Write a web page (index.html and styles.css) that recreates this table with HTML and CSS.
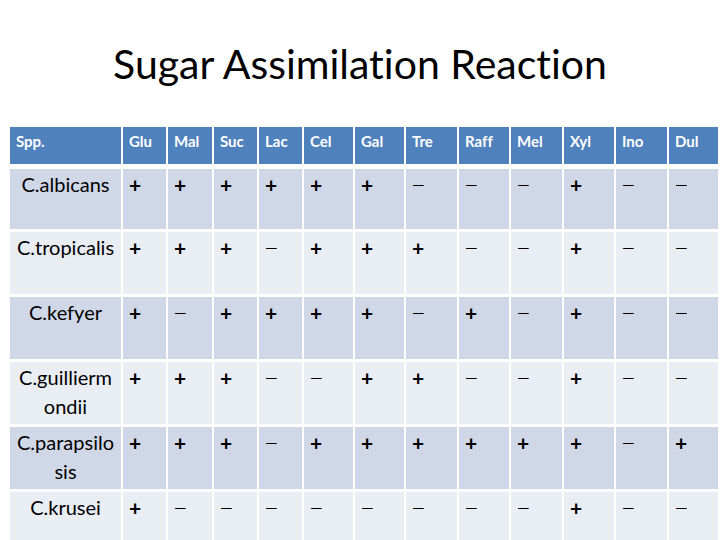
FILE: index.html
```html
<!DOCTYPE html>
<html lang="en">
<head>
<meta charset="utf-8">
<title>Sugar Assimilation Reaction</title>
<link rel="stylesheet" href="styles.css">
</head>
<body>
<h1 class="title">Sugar Assimilation Reaction</h1>
<div class="table">
  <div class="thead">
    <div class="th">Spp.</div><div class="th">Glu</div><div class="th">Mal</div><div class="th">Suc</div><div class="th">Lac</div><div class="th">Cel</div><div class="th">Gal</div><div class="th">Tre</div><div class="th">Raff</div><div class="th">Mel</div><div class="th">Xyl</div><div class="th">Ino</div><div class="th">Dul</div>
  </div>
  <div class="tbody">
    <div class="tr dark">
      <div class="td name">C.albicans</div>
      <div class="td"><span class="p">+</span></div><div class="td"><span class="p">+</span></div><div class="td"><span class="p">+</span></div><div class="td"><span class="p">+</span></div><div class="td"><span class="p">+</span></div><div class="td"><span class="p">+</span></div><div class="td"><span class="m">—</span></div><div class="td"><span class="m">—</span></div><div class="td"><span class="m">—</span></div><div class="td"><span class="p">+</span></div><div class="td"><span class="m">—</span></div><div class="td"><span class="m">—</span></div>
    </div>
    <div class="tr light">
      <div class="td name">C.tropicalis</div>
      <div class="td"><span class="p">+</span></div><div class="td"><span class="p">+</span></div><div class="td"><span class="p">+</span></div><div class="td"><span class="m">—</span></div><div class="td"><span class="p">+</span></div><div class="td"><span class="p">+</span></div><div class="td"><span class="p">+</span></div><div class="td"><span class="m">—</span></div><div class="td"><span class="m">—</span></div><div class="td"><span class="p">+</span></div><div class="td"><span class="m">—</span></div><div class="td"><span class="m">—</span></div>
    </div>
    <div class="tr dark">
      <div class="td name">C.kefyer</div>
      <div class="td"><span class="p">+</span></div><div class="td"><span class="m">—</span></div><div class="td"><span class="p">+</span></div><div class="td"><span class="p">+</span></div><div class="td"><span class="p">+</span></div><div class="td"><span class="p">+</span></div><div class="td"><span class="m">—</span></div><div class="td"><span class="p">+</span></div><div class="td"><span class="m">—</span></div><div class="td"><span class="p">+</span></div><div class="td"><span class="m">—</span></div><div class="td"><span class="m">—</span></div>
    </div>
    <div class="tr light">
      <div class="td name">C.guillierm ondii</div>
      <div class="td"><span class="p">+</span></div><div class="td"><span class="p">+</span></div><div class="td"><span class="p">+</span></div><div class="td"><span class="m">—</span></div><div class="td"><span class="m">—</span></div><div class="td"><span class="p">+</span></div><div class="td"><span class="p">+</span></div><div class="td"><span class="m">—</span></div><div class="td"><span class="m">—</span></div><div class="td"><span class="p">+</span></div><div class="td"><span class="m">—</span></div><div class="td"><span class="m">—</span></div>
    </div>
    <div class="tr dark">
      <div class="td name">C.parapsilo sis</div>
      <div class="td"><span class="p">+</span></div><div class="td"><span class="p">+</span></div><div class="td"><span class="p">+</span></div><div class="td"><span class="m">—</span></div><div class="td"><span class="p">+</span></div><div class="td"><span class="p">+</span></div><div class="td"><span class="p">+</span></div><div class="td"><span class="p">+</span></div><div class="td"><span class="p">+</span></div><div class="td"><span class="p">+</span></div><div class="td"><span class="m">—</span></div><div class="td"><span class="p">+</span></div>
    </div>
    <div class="tr light">
      <div class="td name">C.krusei</div>
      <div class="td"><span class="p">+</span></div><div class="td"><span class="m">—</span></div><div class="td"><span class="m">—</span></div><div class="td"><span class="m">—</span></div><div class="td"><span class="m">—</span></div><div class="td"><span class="m">—</span></div><div class="td"><span class="m">—</span></div><div class="td"><span class="m">—</span></div><div class="td"><span class="m">—</span></div><div class="td"><span class="p">+</span></div><div class="td"><span class="m">—</span></div><div class="td"><span class="m">—</span></div>
    </div>
  </div>
</div>
</body>
</html>
```

FILE: styles.css
```css
html, body {
  margin: 0;
  padding: 0;
  background: #ffffff;
  width: 720px;
  height: 540px;
  overflow: hidden;
}

body {
  font-family: Lato, "Liberation Sans", sans-serif;
  color: #000;
  font-variant-ligatures: none;
}

.title {
  margin: 0;
  padding-top: 39px;
  height: 127px;
  box-sizing: border-box;
  font-size: 41px;
  line-height: 49px;
  font-weight: 400;
  text-align: center;
}

.table {
  margin-left: 10px;
  --cols: 111px 43px 44px 43px 43px 49px 49px 51px 50px 51px 50px 51px 49px;
}

.thead,
.tr {
  display: grid;
  grid-template-columns: var(--cols);
  column-gap: 2px;
}

.thead {
  height: 37px;
  margin-bottom: 5px;
}

.th {
  background: #4f81bd;
  color: #fff;
  font-weight: 700;
  font-size: 15px;
  line-height: 18px;
  padding: 5px 0 0 6px;
}

.tbody {
  display: grid;
  grid-template-rows: 60px 62px 62px 62px 62px 62px;
  row-gap: 3px;
}

.dark .td { background: #d0d8e8; }
.light .td { background: #e9edf4; }

.td {
  padding: 1px 0 0 6px;
  font-size: 18px;
  line-height: 29px;
}

.td.name {
  text-align: center;
  padding: 1px 1px 0 1px;
  font-size: 20px;
}

.p {
  font-weight: 700;
  font-size: 21px;
}

.m {
  font-size: 16px;
  font-weight: 400;
  position: relative;
  top: -1px;
}
```
